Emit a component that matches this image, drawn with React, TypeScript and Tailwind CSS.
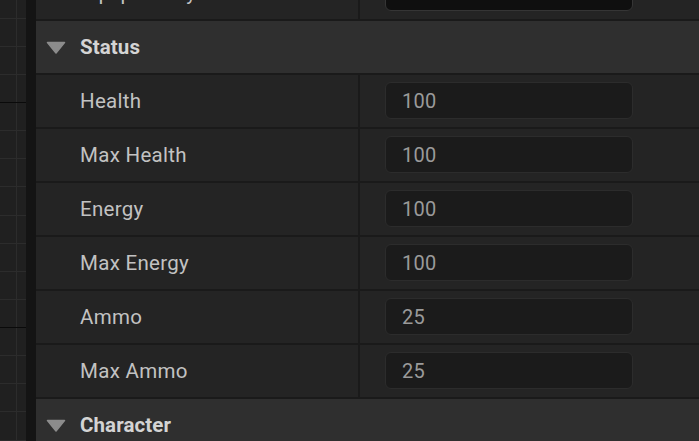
import React from "react";

const minorYs = [17.6, 45.75, 73.9, 130.1, 158.25, 186.4, 214.5, 242.6, 270.75, 298.9, 355.1, 383.25, 411.4, 439.5];
const majorYs = [102, 327];

function GraphGrid() {
  return (
    <svg width="26" height="441" viewBox="0 0 26 441" className="block">
      <rect x="0" y="0" width="26" height="441" fill="#202020" />
      <line x1="16.5" y1="0" x2="16.5" y2="441" stroke="#2c2c2c" strokeWidth="1" />
      {minorYs.map((y) => (
        <line key={y} x1="0" y1={Math.round(y) + 0.5} x2="26" y2={Math.round(y) + 0.5} stroke="#2c2c2c" strokeWidth="1" />
      ))}
      {majorYs.map((y) => (
        <line key={y} x1="0" y1={y + 0.5} x2="26" y2={y + 0.5} stroke="#0a0a0a" strokeWidth="1" />
      ))}
    </svg>
  );
}

function Caret() {
  return (
    <svg width="20" height="13" viewBox="0 0 20 13" className="block">
      <path d="M1.5 1.5 L18.5 1.5 L10 12 Z" fill="#8c8c8c" stroke="#8c8c8c" strokeWidth="1.5" strokeLinejoin="round" />
    </svg>
  );
}

function Header({ title }: { title: string }) {
  return (
    <div className="h-[52px] shrink-0 bg-[#2f2f2f] flex items-center">
      <div className="w-[44px] flex justify-end pr-[14px]">
        <Caret />
      </div>
      <span className="text-[20.5px] font-bold text-[#d4d4d4] leading-none tracking-[0.1px]">{title}</span>
    </div>
  );
}

function PropRow({ label, value, dark }: { label: string; value: string; dark?: boolean }) {
  return (
    <div className="h-[52px] shrink-0 bg-[#242424] flex">
      <div className="w-[322px] shrink-0 pl-[44px] flex items-center text-[20.5px] text-[#c2c2c2] leading-none tracking-[0.3px]">
        {label}
      </div>
      <div className="w-[2px] shrink-0 bg-[#1a1a1a]" />
      <div className="flex-1 pl-[25px] pt-[7px]">
        <div
          className={
            dark
              ? "w-[248px] h-[37px] rounded-[6px] border border-[#353535] bg-[#0f0f0f]"
              : "w-[248px] h-[37px] rounded-[6px] border border-[#2c2c2c] bg-[#1b1b1b] pl-[16px] flex items-center text-[20px] text-[#9a9a9a] leading-none tracking-[0.2px]"
          }
        >
          {value}
        </div>
      </div>
    </div>
  );
}

export default function App() {
  return (
    <div className="w-[699px] h-[441px] overflow-hidden flex bg-[#202020] font-['Roboto',sans-serif]">
      <div className="w-[26px] shrink-0">
        <GraphGrid />
      </div>
      <div className="w-[10px] shrink-0 bg-[#141414]" />
      <div className="flex-1 flex flex-col gap-[2px] bg-[#1a1a1a] -mt-[33px]">
        <PropRow label="Equip Ability" value="" dark />
        <Header title="Status" />
        <PropRow label="Health" value="100" />
        <PropRow label="Max Health" value="100" />
        <PropRow label="Energy" value="100" />
        <PropRow label="Max Energy" value="100" />
        <PropRow label="Ammo" value="25" />
        <PropRow label="Max Ammo" value="25" />
        <Header title="Character" />
      </div>
    </div>
  );
}
